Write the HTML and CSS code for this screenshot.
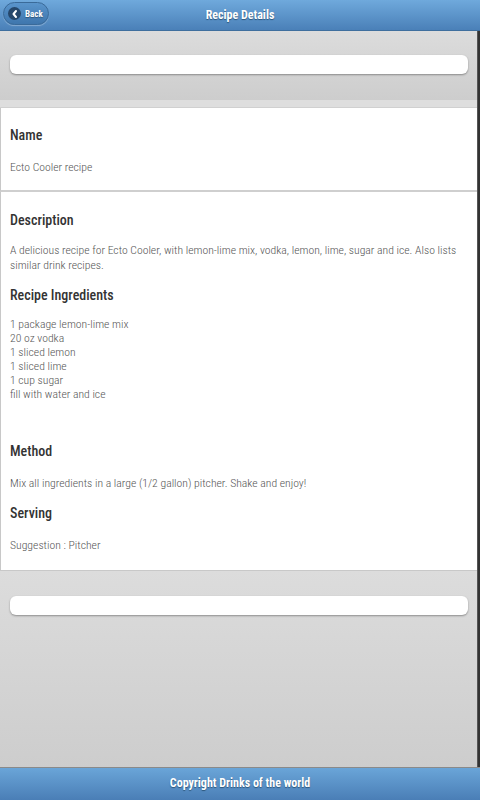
FILE: index.html
```html
<!DOCTYPE html>
<html>
<head>
<meta charset="utf-8">
<title>Recipe Details</title>
<link rel="stylesheet" href="styles.css">
</head>
<body>
<div class="page">
  <header class="header">
    <a class="back-btn" href="#">
      <span class="back-icon"><svg width="12" height="12" viewBox="0 0 12 12"><path d="M7 3 L4.5 6 L7 9" fill="none" stroke="#fff" stroke-width="2" stroke-linecap="round" stroke-linejoin="round"/></svg></span>
      <span class="back-label">Back</span>
    </a>
    <h1 class="title">Recipe Details</h1>
  </header>
  <div class="main">
    <div class="content">
      <div class="bar-area top">
        <div class="bar"></div>
      </div>
      <div class="band"></div>
      <section class="card first">
        <h2 class="heading">Name</h2>
        <p class="text">Ecto Cooler recipe</p>
      </section>
      <section class="card">
        <h2 class="heading">Description</h2>
        <p class="text desc">A delicious recipe for Ecto Cooler, with lemon-lime mix, vodka, lemon, lime, sugar and ice. Also lists similar drink recipes.</p>
        <h2 class="heading">Recipe Ingredients</h2>
        <p class="text list">1 package lemon-lime mix<br>20 oz vodka<br>1 sliced lemon<br>1 sliced lime<br>1 cup sugar<br>fill with water and ice</p>
        <h2 class="heading method">Method</h2>
        <p class="text">Mix all ingredients in a large (1/2 gallon) pitcher. Shake and enjoy!</p>
        <h2 class="heading">Serving</h2>
        <p class="text">Suggestion : Pitcher</p>
      </section>
      <div class="bar-area bottom">
        <div class="bar"></div>
      </div>
    </div>
    <div class="scroll"></div>
  </div>
  <footer class="footer">Copyright Drinks of the world</footer>
</div>
</body>
</html>
```
FILE: styles.css
```css
* { box-sizing: border-box; margin: 0; padding: 0; }
html, body { width: 480px; height: 800px; overflow: hidden; }
body {
  font-family: "Roboto Condensed", "Arial Narrow", "Roboto", sans-serif;
  font-stretch: 75%;
  background: #d4d4d4;
}
.page { display: flex; flex-direction: column; height: 800px; }
.header {
  height: 31px;
  flex: none;
  position: relative;
  display: flex;
  align-items: center;
  justify-content: center;
  background: linear-gradient(#6fa9dc, #4a80b8);
  border-bottom: 1px solid #3f6f9e;
}
.title {
  font-size: 12px;
  font-weight: bold;
  color: #fff;
  text-shadow: 0 1px 1px #2c5578;
}
.back-btn {
  position: absolute;
  left: 3px;
  top: 2px;
  width: 46px;
  height: 23px;
  border-radius: 12px;
  border: 1px solid #3a6a99;
  background: linear-gradient(#5a95cc, #3f76ad);
  box-shadow: 0 1px 1px rgba(255,255,255,0.3);
  display: flex;
  align-items: center;
  gap: 4px;
  padding-left: 4px;
  text-decoration: none;
}
.back-icon {
  width: 13px;
  height: 13px;
  border-radius: 50%;
  background: #26476a;
  display: flex;
  align-items: center;
  justify-content: center;
}
.back-label {
  font-size: 9px;
  font-weight: bold;
  color: #fff;
  text-shadow: 0 1px 1px #2c5578;
}
.main { flex: 1; display: flex; min-height: 0; }
.content { flex: 1; display: flex; flex-direction: column; }
.scroll {
  width: 3px;
  flex: none;
  background: #333;
  border-left: 1px solid #555;
}
.bar-area {
  background: linear-gradient(#dcdcdc, #cdcdcd);
  padding: 24px 9px 0 10px;
}
.bar-area.top { height: 69px; }
.bar-area.bottom { flex: 1; padding-top: 25px; }
.bar {
  height: 19px;
  background: #fff;
  border-radius: 6px;
  box-shadow: 0 1px 2px rgba(0,0,0,0.35);
}
.band { height: 8px; background: #dedede; border-bottom: 1px solid #d0d0d0; }
.card {
  background: #fff;
  border-left: 1px solid #c8c8c8;
  border-bottom: 1px solid #c8c8c8;
  padding: 18px 6px 16px 9px;
}
.card.first { border-bottom: 2px solid #cfcfcf; padding-bottom: 15px; }
.card + .card { padding-top: 19px; padding-bottom: 17px; }
.heading {
  font-size: 14px;
  line-height: 18px;
  font-weight: 500;
  color: #333;
}
.text {
  font-size: 11.7px;
  line-height: 16px;
  font-weight: 300;
  color: #555;
  margin-top: 15px;
}
.text + .heading { margin-top: 13px; }
.desc { line-height: 15px; margin-top: 14px; }
.list { line-height: 14px; margin-top: 13px; }
.heading.method { margin-top: 41px; }
.footer {
  height: 33px;
  flex: none;
  background: linear-gradient(#6aa5d8, #4a7eb6);
  border-top: 1px solid #8a8a8a;
  color: #fff;
  font-size: 12px;
  font-weight: bold;
  text-align: center;
  line-height: 30px;
  text-shadow: 0 1px 1px #2c5578;
}
```
